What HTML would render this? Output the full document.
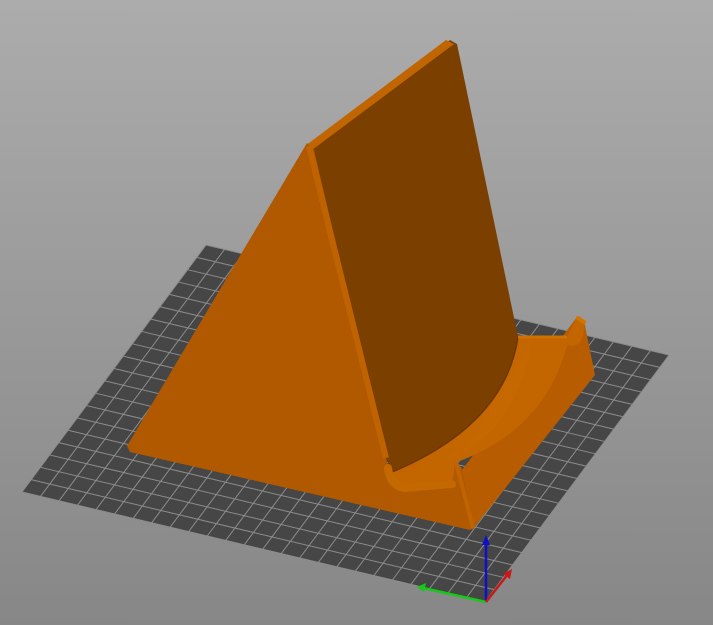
<!DOCTYPE html>
<html><head><meta charset="utf-8"><style>
html,body{margin:0;padding:0;width:713px;height:625px;overflow:hidden}
body{background:#9c9c9c}
svg{position:absolute;left:0;top:0}
</style></head><body>
<svg width="713" height="625" viewBox="0 0 713 625">
<defs>
<linearGradient id="bg" x1="0" y1="0" x2="0" y2="1"><stop offset="0" stop-color="#acacac"/><stop offset="1" stop-color="#878787"/></linearGradient>
<linearGradient id="band" x1="0" y1="0" x2="1" y2="0.6"><stop offset="0" stop-color="#8a4500"/><stop offset="0.35" stop-color="#c06300"/><stop offset="1" stop-color="#c86a00"/></linearGradient>
</defs>
<rect width="713" height="625" fill="url(#bg)"/>
<g transform="matrix(-18.52,-4.4,9.2,-12.35,485,602)">
<polygon points="0,0 25,0 25,20 0,20" fill="#464646"/>
<path vector-effect="non-scaling-stroke" stroke="#8c8c8c" stroke-width="1" fill="none" d="M0,0V20M1,0V20M2,0V20M3,0V20M4,0V20M5,0V20M6,0V20M7,0V20M8,0V20M9,0V20M10,0V20M11,0V20M12,0V20M13,0V20M14,0V20M15,0V20M16,0V20M17,0V20M18,0V20M19,0V20M20,0V20M21,0V20M22,0V20M23,0V20M24,0V20M25,0V20M0,0H25M0,1H25M0,2H25M0,3H25M0,4H25M0,5H25M0,6H25M0,7H25M0,8H25M0,9H25M0,10H25M0,11H25M0,12H25M0,13H25M0,14H25M0,15H25M0,16H25M0,17H25M0,18H25M0,19H25M0,20H25"/>
</g>
<!-- right side face of cradle -->
<polygon points="577,317 584,321 595,375 472,530 462,470" fill="#b85c00"/>
<!-- back panel -->
<path d="M450,40 L457,44 L518,337 Q505,425 392,472 L386,458 L310,146Z" fill="#7b3f00"/>
<!-- cradle band -->
<path d="M518,337 L567,337 L577,317 L584,321 Q585,350 567,345 Q545,430 457,462 L452,483 L395,486 L392,472 Q505,425 518,337Z" fill="#c46600"/>
<path d="M518,337 Q505,425 392,472 L420,472 Q520,440 532,338Z" fill="url(#band)"/>
<path d="M518,337 Q505,425 392,472" stroke="#6e3800" stroke-width="1.5" fill="none"/>
<path d="M518,337 L567,337" stroke="#d07000" stroke-width="3"/>
<path d="M578,318 L584,322" stroke="#d47400" stroke-width="4" stroke-linecap="round"/>
<!-- top edge of back panel -->
<polygon points="305,146 446,40 454,44 312,150" fill="#c06500"/>
<!-- left face -->
<polygon points="307,143 314,150 386,458 392,484 452,488 455,462 462,468 473,528 470,530 130,452 127,446" fill="#b15900"/>
<path d="M309,146 L386,458" stroke="#bf6200" stroke-width="6" fill="none"/>
<path d="M388,468 Q390,486 405,488 L452,484" stroke="#c46800" stroke-width="8" fill="none" stroke-linecap="round"/>
<path d="M456,462 L473,528" stroke="#c06300" stroke-width="4"/>
<!-- axes -->
<line x1="486" y1="602" x2="486" y2="542" stroke="#1010c8" stroke-width="2.5"/>
<polygon points="486,535 482,545 490,545" fill="#1010c8"/>
<line x1="486" y1="602" x2="423" y2="588" stroke="#18c818" stroke-width="2.5"/>
<polygon points="417,587 426,583 424,592" fill="#18c818"/>
<line x1="486" y1="602" x2="508" y2="574" stroke="#c81818" stroke-width="2.5"/>
<polygon points="512,569 503,574 510,579" fill="#c81818"/>
</svg>
</body></html>
